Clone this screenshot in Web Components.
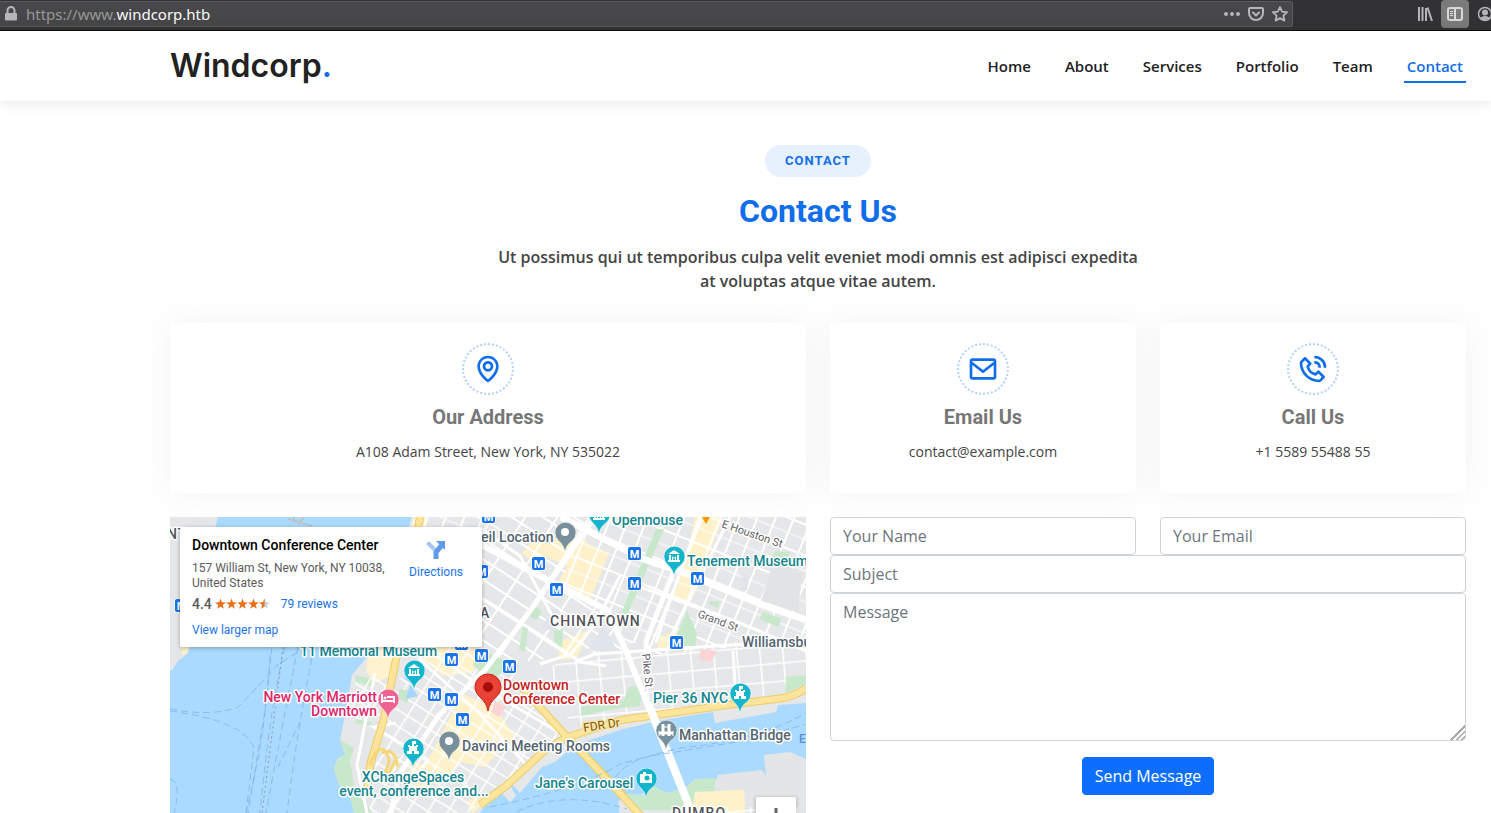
<!DOCTYPE html>
<html lang="en">
<head>
<meta charset="utf-8">
<title>Windcorp</title>
<style>
html, body { margin: 0; height: 100%; }
body { font-family: "Open Sans", sans-serif; color: #444; background: #fff; overflow: hidden; }
</style>
</head>
<body>
<wc-window></wc-window>

<template id="window-tpl">
<style>
:host { display: flex; flex-direction: column; height: 100vh; }
main { flex: 1; min-height: 0; overflow: auto; scrollbar-width: none; }
.contact { padding: 44px 25px 24px 170px; }
.grid { display: grid; grid-template-columns: repeat(4, minmax(0, 1fr)); gap: 24px; margin-top: 30px; }
.wide { grid-column: span 2; }
</style>
<wc-toolbar></wc-toolbar>
<wc-header></wc-header>
<main>
<section class="contact">
<wc-section-title>
<span slot="badge">Contact</span>
<span slot="title">Contact Us</span>
Ut possimus qui ut temporibus culpa velit eveniet modi omnis est adipisci expedita at voluptas atque vitae autem.
</wc-section-title>
<div class="grid">
<wc-info-box class="wide" icon="map"><span slot="title">Our Address</span>A108 Adam Street, New York, NY 535022</wc-info-box>
<wc-info-box icon="mail"><span slot="title">Email Us</span>contact@example.com</wc-info-box>
<wc-info-box icon="phone"><span slot="title">Call Us</span>+1 5589 55488 55</wc-info-box>
<wc-map class="wide"></wc-map>
<wc-contact-form class="wide"></wc-contact-form>
</div>
</section>
</main>
</template>

<template id="toolbar-tpl">
<style>
:host { display: flex; align-items: flex-start; height: 30px; background: #323234; border-bottom: 1px solid #0c0c0d; overflow: hidden; }
.url { flex: 1; display: flex; align-items: center; box-sizing: border-box; height: 26px; margin-top: 1px; padding: 0 4px; background: #474749; border: 1px solid #5c5c5f; border-left: 0; border-radius: 0 3px 3px 0; font: 15px/24px "Noto Sans", sans-serif; color: #f9f9fa; }
.address { flex: 1; margin-left: 8px; }
.address span { color: #98989a; }
svg { display: block; }
button { padding: 0; border: 0; background: none; color: #b6b6b8; }
.url button + button { margin-left: 8px; }
.tools { display: flex; align-items: flex-start; width: 198px; flex: none; justify-content: flex-end; }
.tools button { height: 28px; flex: none; display: grid; place-items: center; }
.library { width: 32px; }
.tools .side { width: 28px; background: #7b7b7c; border-radius: 4px; color: #d8d8d9; }
.account { width: 22px; overflow: hidden; }
</style>
<div class="url">
<svg width="14" height="16" viewBox="0 0 14 16"><path d="M1.500 7.500h11v6.500h-11z" fill="#b6b6b8" stroke="#b6b6b8" stroke-linejoin="round"/><path d="M3.500 7V4.500a3.500 3.500 0 0 1 7 0V7" fill="none" stroke="#b6b6b8" stroke-width="2"/></svg>
<div class="address"><span>https://www.</span>windcorp.htb</div>
<button aria-label="Page actions"><svg width="16" height="16" fill="currentColor"><circle cx="2" cy="8" r="2"/><circle cx="8" cy="8" r="2"/><circle cx="14" cy="8" r="2"/></svg></button>
<button aria-label="Save to Pocket"><svg width="16" height="16" fill="none" stroke="currentColor" stroke-width="2" stroke-linecap="round" stroke-linejoin="round"><path d="M2 2h12q1 0 1 1v4a7 7 0 0 1-14 0V3q0-1 1-1z"/><path d="M5 6.500l3 3 3-3"/></svg></button>
<button aria-label="Bookmark"><svg width="16" height="16" fill="none" stroke="currentColor" stroke-width="1.800" stroke-linejoin="round"><path d="M8 1l2.100 4.600 5 .6-3.700 3.400 1 5L8 12.100 3.600 14.600l1-5L.9 6.200l5-.6z"/></svg></button>
</div>
<div class="tools">
<button class="library" aria-label="Library"><svg width="16" height="16" stroke="currentColor" stroke-width="2"><path d="M2 1v14M5.500 1v14M9 2v13" /><path d="M10.500 1.500L15 15" /></svg></button>
<button class="side" aria-label="Sidebars"><svg width="16" height="16" fill="none" stroke="currentColor" stroke-width="2"><rect x="1" y="2" width="14" height="12" rx="2"/><path d="M8 2v12"/><path d="M3 5.500h3M3 7.500h3M3 9.500h3" stroke-width="1"/></svg></button>
<button class="account" aria-label="Account"><svg width="16" height="16" style="margin-left:8px"><circle cx="8" cy="8" r="6.500" fill="none" stroke="currentColor" stroke-width="1.500"/><circle cx="8" cy="6.500" r="3" fill="currentColor"/><path d="M3 12q5-4 10 0-5 4-10 0" fill="currentColor"/></svg></button>
</div>
</template>

<template id="header-tpl">
<style>
:host { display: flex; align-items: center; justify-content: space-between; flex: none; height: 70px; padding: 0 25px 0 170px; background: #fff; box-shadow: 0 0 15px rgba(0,0,0,.12); position: relative; z-index: 1; }
a { text-decoration: none; }
.logo { font: 600 32px/40px Inter, sans-serif; color: #222; }
.logo span { color: #106eea; }
nav { display: flex; gap: 28px; margin-top: 3px; }
nav a { font-weight: 600; font-size: 15px; line-height: 28px; padding: 0 3px 1px; color: #222; border-bottom: 2px solid transparent; }
nav a[aria-current] { color: #106eea; border-color: #106eea; }
</style>
<a class="logo" href="#home">Windcorp<span>.</span></a>
<nav><a href="#home">Home</a><a href="#about">About</a><a href="#services">Services</a><a href="#portfolio">Portfolio</a><a href="#team">Team</a><a href="#contact" aria-current="page">Contact</a></nav>
</template>

<template id="title-tpl">
<style>
:host { display: flex; flex-direction: column; align-items: center; text-align: center; }
.badge { font: 700 13px/16px Roboto, sans-serif; letter-spacing: 1px; text-transform: uppercase; padding: 8px 20px; border-radius: 50px; background: #e7f1fd; color: #106eea; }
h2 { margin: 15px 0 0; font: 700 32px/38px Roboto, sans-serif; color: #106eea; }
p { width: 50%; margin: 15px 0 0; font-size: 16px; line-height: 24px; font-weight: 600; }
</style>
<div class="badge"><slot name="badge"></slot></div>
<h2><slot name="title"></slot></h2>
<p><slot></slot></p>
</template>

<template id="info-tpl">
<style>
:host { display: flex; flex-direction: column; align-items: center; text-align: center; padding: 20px 0 30px; background: #fff; box-shadow: 0 0 30px rgba(214,215,216,.3); }
.icon { box-sizing: border-box; width: 52px; height: 52px; padding: 8px; border: 2px dotted #b3d1fa; border-radius: 50%; color: #106eea; }
svg { display: block; width: 32px; height: 32px; fill: currentColor; }
h3 { margin: 10px 0 12px; font: 700 20px/24px Roboto, sans-serif; color: #777; }
p { margin: 0; font-size: 14px; line-height: 22px; }
</style>
<div class="icon"><svg viewBox="0 0 24 24" aria-hidden="true"><path/></svg></div>
<h3><slot name="title"></slot></h3>
<p><slot></slot></p>
</template>

<template id="form-tpl">
<style>
:host { display: block; }
form { display: grid; grid-template-columns: 1fr 1fr; column-gap: 24px; }
input, textarea { box-sizing: border-box; width: 100%; min-width: 0; margin: 0; display: block; padding: 6px 12px; border: 1px solid #ced4da; border-radius: 4px; background: #fff; font: 16px/24px "Open Sans", sans-serif; color: #212529; }
input { height: 38px; }
textarea { height: 148px; resize: vertical; }
::placeholder { color: #6c757d; opacity: 1; }
textarea::-webkit-resizer { background: linear-gradient(135deg, transparent 50%, #aaa 50% 57%, transparent 57% 68%, #aaa 68% 75%, transparent 75% 86%, #aaa 86% 93%, transparent 93%); }
.full { grid-column: 1 / -1; }
button { justify-self: center; margin-top: 16px; padding: 6px 12px; border: 1px solid #0d6efd; border-radius: 4px; background: #0d6efd; color: #fff; font: 16px/24px "Open Sans", sans-serif; }
</style>
<form>
<input type="text" placeholder="Your Name" aria-label="Your Name">
<input type="email" placeholder="Your Email" aria-label="Your Email">
<input class="full" type="text" placeholder="Subject" aria-label="Subject">
<textarea class="full" placeholder="Message" aria-label="Message"></textarea>
<button class="full" type="button">Send Message</button>
</form>
</template>

<template id="place-tpl">
<style>
:host { display: flex; justify-content: space-between; box-sizing: border-box; background: #fff; border-radius: 2px; box-shadow: 0 1px 4px rgba(0,0,0,.3); padding: 10px 19px 9px 12px; font: 12px/15px Roboto, sans-serif; color: #5b5b5b; }
h4 { margin: 0 0 8px; font: 500 14px/16px Roboto, sans-serif; color: #000; }
address { font-style: normal; width: 196px; }
a { color: #1a73e8; text-decoration: none; }
.rating { display: flex; align-items: center; margin: 4px 0 10px; line-height: 18px; }
.rating b { font-weight: 500; font-size: 14px; margin-right: 3px; }
.rating svg { margin-right: 11px; }
.dir { display: flex; flex-direction: column; align-items: center; gap: 4px; margin-top: 2px; }
</style>
<div>
<h4>Downtown Conference Center</h4>
<address>157 William St, New York, NY 10038, United States</address>
<div class="rating"><b>4.4</b>
<svg width="55" height="12" viewBox="0 0 55 12" role="img" aria-label="4.4 stars">
<defs><path id="s" d="M5.500 .5l1.400 3.800 4 .1-3.200 2.500 1.200 3.900-3.400-2.300-3.400 2.300 1.200-3.900L.1 4.400l4-.1z"/><clipPath id="h"><path d="M0 0h49.500v12H0z"/></clipPath></defs>
<use href="#s" x="44" fill="#ccc"/><g fill="#e7711b" clip-path="url(#h)"><use href="#s"/><use href="#s" x="11"/><use href="#s" x="22"/><use href="#s" x="33"/><use href="#s" x="44"/></g></svg>
<a href="#reviews">79 reviews</a></div>
<a href="#larger">View larger map</a>
</div>
<a class="dir" href="#directions"><svg width="22" height="22" viewBox="0 0 22 22"><path d="M2.500 3.500l7 7" stroke="#a6c8f5" stroke-width="4"/><path d="M11 20v-7l6-7" fill="none" stroke="#5e9bea" stroke-width="5"/><path d="M11 2h9v9z" fill="#5e9bea"/></svg>Directions</a>
</template>

<template id="map-tpl">
<style>
:host { display: block; position: relative; height: 384px; overflow: hidden; background: #aadaff; }
.canvas { display: block; width: 100%; height: 100%; }
wc-place-card { position: absolute; left: 10px; top: 10px; width: 302px; height: 120px; }
.zoom { position: absolute; right: 10px; top: 280px; width: 40px; background: #fff; border-radius: 2px; box-shadow: 0 1px 4px rgba(0,0,0,.3); }
.zoom button { display: grid; place-items: center; width: 40px; height: 40px; padding: 0; border: 0; background: none; }
text { font-family: Roboto, sans-serif; font-size: 14px; font-weight: 500; paint-order: stroke; stroke: #fff; stroke-width: 3px; stroke-linejoin: round; }
.teal { fill: #12858e; }
.slate { fill: #546570; }
.pink { fill: #e0246a; }
.red { fill: #c5221f; }
.area { fill: #505357; letter-spacing: 1px; }
.road { fill: #5f6368; font-size: 11px; font-weight: 400; }
.fdr { fill: #7c5514; font-size: 12px; font-weight: 400; stroke: #fbe6a5; }
.metro text { font-size: 11px; font-weight: 700; fill: #fff; stroke: none; text-anchor: middle; }
.mid { text-anchor: middle; }
.end { text-anchor: end; }
</style>
<svg class="canvas" viewBox="0 0 636 384" preserveAspectRatio="xMidYMin slice" role="img" aria-label="Map of Lower Manhattan">
<defs>
<pattern id="east" width="17" height="29" patternUnits="userSpaceOnUse" patternTransform="rotate(22)"><path d="M0 0H17M0 0V29" stroke="#fff" stroke-width="4"/><path d="M0 15H17" stroke="#fff" stroke-width="1"/></pattern>
<pattern id="soho" width="27" height="17" patternUnits="userSpaceOnUse" patternTransform="rotate(33)"><path d="M0 0H27M0 0V17" stroke="#fff" stroke-width="4"/></pattern>
<pattern id="fidi" width="17" height="14" patternUnits="userSpaceOnUse" patternTransform="rotate(32)"><path d="M0 0H17M0 0V14" stroke="#fff" stroke-width="3"/></pattern>
<pattern id="les" width="23" height="18" patternUnits="userSpaceOnUse" patternTransform="rotate(-5)"><path d="M0 0H23M0 0V18" stroke="#fff" stroke-width="3"/></pattern>
<clipPath id="landclip"><use href="#land"/></clipPath>
<g id="m" class="metro"><rect x="-7" y="-7" width="15" height="15" rx="3" fill="#fff" opacity=".6"/><rect x="-6" y="-6" width="13" height="13" rx="2" fill="#1a73e8"/><text x=".5" y="4.500">M</text></g>
<path id="pin" d="M0 20C-1 14-4 11-7 8A10.500 10.500 0 1 1 8 8C4 11 1 14 0 20z" stroke="#fff" stroke-opacity=".5"/>
<path id="museum" d="M-6-2L0-6 6-2zM-5-1h2v5h-2zM3-1h2v5H3zM-6 4H6v2H-6zM-2 4v-4l2 2 2-2v4h-1V2L0 3l-1-1v2z" fill="#fff"/>
<path id="civic" d="M0-7h3v3H1v2h2v-1h2v2h-1v4h2v3H1V3h-2v3h-5V3h2v-4h-1v-2h2v1h2v-5z" fill="#fff"/>
</defs>

<!-- New Jersey shore -->
<path d="M0 0H48L12 135 16 138 8 144 2 153H0z" fill="#e5e6e8"/>
<path d="M12 130H20L17 137 12 138z" fill="#fff2c9"/>
<!-- Manhattan -->
<path id="land" d="M242 0H636V186L608 188 606 195 545 206 543 195 487 204 450 213 405 228 385 245 372 250 350 276 337 262 346 279 340 285 326 270 322 276 310 296 296 318H190L184 296 181 282 169 268 164 252 168 241 175 238 170 223 177 188 182 158 197 140z" fill="#e6e7e9"/>
<path d="M244 0H258L230 138 222 158 206 166 196 155 198 140 205 128z" fill="#fff2cf"/>
<path d="M170 223l14 8-4 12 5 32 16 18-4 16-13-13-3-14-12-14-5-16 4-11 7-3zM185 158l17 4 2 8-18-5z" fill="#c8e8cb"/>

<g fill="#fff1c9">
<path d="M391 10l27 15-10 28-31-13zM413 25l26 11-20 50-32-20zM525 0h28l-31 83h-20l14-38zM389 125l30-12-12 28-18 2zM490 119l28-8-5 20-26 3zM364 21l20 8-12 20-20-12zM262 115l24-12 30 30-13 22-30 4-22-18zM292 177l33 13 20 30-31 30-22-5-16 14-25-5 14-24zM240 245l28 5-8 23-22-5zM297 285l13-10 5 10-13 12z"/>
</g>
<g clip-path="url(#landclip)">
<path d="M312 0H425L390 66 437 93 455 132 312 150z" fill="url(#soho)"/>
<path d="M425 0H636V98L500 54 473 126H451L437 93 391 66z" fill="url(#east)"/>
<path d="M500 54L636 98V123L478 139 473 120z" fill="url(#east)"/>
<path d="M455 134L636 119V172L450 202 405 210 362 159 400 140z" fill="url(#les)"/>
<path d="M255 130L310 130 360 165 395 220 310 288 296 296H199L210 215 178 200 186 158 226 165z" fill="url(#fidi)"/>
<path d="M243 0H312V12H243z" fill="url(#east)"/>
</g>
<g fill="#c8e8cb">
<path d="M486 12h8L458 97l-8 2zM366 90l6 5-5 8-8-4zM354 102l4 10-3 22-6-1zM384 112h9l-1 20-8-5zM593 95l18 6-2 9-20-8zM517 94l10 22-2 15-22-5zM606 34l14 1-3 19-22-5zM313 133l28 14-20 18-18-17zM459 170l13-1-2 20-20 2zM411 190l55-9-3 7-52 11zM616 160l20-2v10l-21 8zM540 84l10 1-2 6-9-4zM230 172l12 2-5 12-10-5zM186 202l16 3-2 4-15-3z"/>
</g>
<path d="M604 42l28 15-4 38-37-11z" fill="#e2e3e5"/>
<path d="M531 132l16 2-6 11-12-3zM325 184l11 6-7 10-8-5z" fill="#fbd4d4"/>
<path d="M434 109l15 28-31-4zM382 90l9 6-6 18-13-2zM573 56l6 2-2 16-7-2z" fill="#dfe5eb"/>
<path d="M240 167l8 12-12 3zM234 161l9-1-3 6z" fill="#a9d7fb"/>

<g fill="none" stroke="#fff" stroke-linejoin="round">
<path d="M391 0l82 42 37 12 83 34 43 15" stroke-width="7"/>
<path d="M310 27l50 27 77 39 20 43 66 165" stroke-width="6"/>
<path d="M503 56l-27 68 1 15M425 0l-65 94-45 59-46 45-40 60-8 38" stroke-width="5"/>
<path d="M470 70l100 36 66 28M451 57l-26 50-24 30-31 10M530 0l-34 95-10 31M560 0l-62 125M310 80l62 39 38 26 26 4M312 12l38 27 40 74M405 145l20-8 211-14M563 134l3 50" stroke-width="3"/>
<path d="M264 137l48 33 85 50M248 141l60 54 52 57M205 156l-18 92 10 48M226 206l-22 4 54 33-40 53" stroke-width="3"/>
</g>
<g fill="none" stroke-linejoin="round">
<g stroke="#edcc6c" stroke-width="8"><path d="M250 0l-23 138-14 67-13 43-3 28"/><path d="M310 288l26-19 37-34q15-11 28-16l50-16 106-15 57-7q15-4 22-10"/><path d="M347 165l50 55 75 78"/></g>
<g stroke="#fce59a" stroke-width="6"><path d="M250 0l-23 138-14 67-13 43-3 28"/><path d="M310 288l26-19 37-34q15-11 28-16l50-16 106-15 57-7q15-4 22-10"/><path d="M347 165l50 55 75 78"/></g>
<path d="M200 248q9-25 17-11c7 13-8 20 2 19l8-16M212 236q12-7 16 14" stroke="#f5d777" stroke-width="3"/>
</g>

<!-- Brooklyn -->
<path d="M448 285L458 277 471 278 480 270 497 276 513 273 523 264 546 263 548 258 592 253 596 259 594 238 620 235 636 242V384H462z" fill="#e4e5e7"/>
<path d="M449 281l12-4 15 2 8-10 12 7 20-5 9-9 20-1v12l-30 20h-53z" fill="#c8e8cb"/>
<path d="M525 275l49-2 2 36H520z" fill="#fff1c9"/><path d="M520 290h116v94H490z" fill="url(#les)"/>
<path d="M420 244l78 84" stroke="#edcc6c" stroke-width="8"/><path d="M418 242l80 86" stroke="#fce59a" stroke-width="6"/>
<path d="M478 186l47 118" stroke="#fff" stroke-width="8"/>

<!-- Ferry routes -->
<g fill="none" stroke="#7fb0e8" stroke-opacity=".75" stroke-dasharray="7 4">
<path d="M0 192q42 8 68-2 20-20 38-41l22-14M0 194q75 10 84 37l-8 65M102 130L94 200 78 296M115 130q-15 60-25 166M128 130q-20 100-32 166M144 130q-18 90-27 166M100 138q-4 80-24 158M108 250l22-45M0 262q12 2 4 34"/>
<path d="M320 290q90-18 130-43l60-16q80-8 126-35M440 270q12-30 60-34l90-15 46-14M337 300q50-30 120-8"/>
</g>
<path d="M113 130L92 296" stroke="#8e9aa8" stroke-dasharray="2 3"/>
<path d="M118 2l14 4M134 0l-5 7M124 0v4l18 5" fill="none" stroke="#bbc4ca" stroke-width="2"/>

<text class="area" x="-3" y="22">NT</text>
<use href="#m" x="318" y="-1"/><use href="#m" x="464" y="36"/><use href="#m" x="368" y="46"/><use href="#m" x="386" y="72"/><use href="#m" x="464" y="66"/><use href="#m" x="527" y="61"/><use href="#m" x="506" y="125"/><use href="#m" x="311" y="138"/><use href="#m" x="281" y="142"/><use href="#m" x="339" y="149"/><use href="#m" x="264" y="177"/><use href="#m" x="281" y="182"/><use href="#m" x="292" y="202"/><use href="#m" x="311" y="54"/><use href="#m" x="291" y="126"/><use href="#m" x="11" y="88"/>

<g fill="#12b5cb">
<use href="#pin" x="429" y="-3"/><use href="#pin" x="504" y="39"/><use href="#pin" x="244" y="153"/><use href="#pin" x="243" y="231"/><use href="#pin" x="570" y="176"/><use href="#pin" x="476" y="261"/>
</g>
<g fill="#78909c"><use href="#pin" x="395" y="15"/><use href="#pin" x="279" y="224"/><use href="#pin" x="496" y="213"/></g>
<use href="#pin" x="218" y="182" fill="#f06292"/>
<path d="M532 0h8l-4 7z" fill="#f29900"/>
<circle cx="395" cy="15" r="4" fill="#fff"/><circle cx="279" cy="224" r="4" fill="#fff"/>
<use href="#museum" x="429" y="-3"/><use href="#museum" x="504" y="39"/><use href="#museum" x="244" y="153"/>
<use href="#civic" x="243" y="231"/><use href="#civic" x="570" y="176"/>
<path d="M470 257h3v-2h3v2h6v9h-12z" fill="#fff"/><circle cx="477" cy="261" r="2.500" fill="#12b5cb"/>
<path d="M212 177v9M212 184h12v2M224 183v-3h-7" fill="none" stroke="#fff" stroke-width="2"/><circle cx="215" cy="181" r="1.500" fill="#fff"/>
<path d="M489 216h14M493 207v12M499 207v12" stroke="#fff" stroke-width="3"/><path d="M489 219v-5M503 219v-5M493 210h6" stroke="#fff"/>
<path d="M318 194c-2-13-13-14-13-24a13 13 0 0 1 26 0c0 10-11 11-13 24z" fill="#ea4335" stroke="#c5221f"/><circle cx="318" cy="170" r="5" fill="#a50e0e"/>

<text class="teal" x="442" y="8">Openhouse</text>
<text class="slate" x="311" y="25">eil Location</text>
<text class="teal" x="517" y="49">Tenement Museum</text>
<text class="area" x="380" y="109">CHINATOWN</text>
<text class="area" x="310" y="101">A</text>
<text class="slate" x="572" y="130">Williamsburg</text>
<text class="teal" x="130" y="139">11 Memorial Museum</text>
<text class="pink end" x="207" y="185">New York Marriott</text><text class="pink end" x="207" y="199">Downtown</text>
<text class="red" x="333" y="173">Downtown</text><text class="red" x="333" y="187">Conference Center</text>
<text class="teal" x="483" y="186">Pier 36 NYC</text>
<text class="slate" x="509" y="223">Manhattan Bridge</text>
<text class="slate" x="292" y="234">Davinci Meeting Rooms</text>
<text class="teal mid" x="243" y="265">XChangeSpaces</text><text class="teal mid" x="244" y="279">event, conference and...</text>
<text class="teal" x="365" y="271">Jane's Carousel</text>
<text class="area" x="502" y="301">DUMBO</text>
<text class="road" transform="translate(551 10) rotate(19)">E Houston St</text>
<text class="road" transform="translate(527 100) rotate(20)">Grand St</text>
<text class="road" transform="translate(472 137) rotate(84)">Pike St</text>
<text class="fdr" transform="translate(414 215) rotate(-9)">FDR Dr</text>
<text x="629" y="226" style="fill:#5b8fd6;stroke:none;font-size:12px">E</text>
</svg>
<wc-place-card></wc-place-card>
<div class="zoom"><button aria-label="Zoom in"><svg width="18" height="18"><path d="M9 0v18M0 9h18" stroke="#666" stroke-width="3"/></svg></button><button aria-label="Zoom out"><svg width="18" height="18"><path d="M0 9h18" stroke="#666" stroke-width="3"/></svg></button></div>
</template>

<script>
const ICONS = {
  map: "M12 14c2.206 0 4-1.794 4-4s-1.794-4-4-4-4 1.794-4 4 1.794 4 4 4zm0-6c1.103 0 2 .897 2 2s-.897 2-2 2-2-.897-2-2 .897-2 2-2zM11.42 21.814a.998.998 0 0 0 1.16 0C12.884 21.599 20.029 16.44 20 10c0-4.411-3.589-8-8-8S4 5.589 4 9.995c-.029 6.445 7.116 11.604 7.42 11.819zM12 4c3.309 0 6 2.691 6 6.005.021 4.438-4.388 8.423-6 9.73-1.611-1.308-6.021-5.294-6-9.735 0-3.309 2.691-6 6-6z",
  mail: "M20 4H4c-1.103 0-2 .897-2 2v12c0 1.103.897 2 2 2h16c1.103 0 2-.897 2-2V6c0-1.103-.897-2-2-2zm0 2v.511l-8 6.223-8-6.222V6h16zM4 18V9.044l7.386 5.745a.994.994 0 0 0 1.228 0L20 9.044 20.002 18H4z",
  phone: "M16.57 22a2 2 0 0 0 1.43-.59l2.71-2.71a1 1 0 0 0 0-1.41l-4-4a1 1 0 0 0-1.41 0l-1.6 1.59a7.55 7.55 0 0 1-3-1.59 7.62 7.62 0 0 1-1.59-3l1.59-1.6a1 1 0 0 0 0-1.41l-4-4a1 1 0 0 0-1.41 0L2.59 6A2 2 0 0 0 2 7.43 15.28 15.28 0 0 0 6.3 17.7 15.28 15.28 0 0 0 16.57 22zM6 5.41L8.59 8 7.3 9.29a1 1 0 0 0-.3.91 10.12 10.12 0 0 0 2.3 4.5 10.08 10.08 0 0 0 4.5 2.3 1 1 0 0 0 .91-.27L16 15.41 18.59 18l-2 2a13.28 13.28 0 0 1-8.87-3.71A13.28 13.28 0 0 1 4 7.41zM20 11h2a8.81 8.81 0 0 0-9-9v2a6.77 6.77 0 0 1 7 7zM13 8c2.1 0 3 .9 3 3h2c0-3.22-1.78-5-5-5z"
};
class TemplateElement extends HTMLElement {
  constructor() {
    super();
    this.attachShadow({ mode: "open" }).append(document.getElementById(this.constructor.template).content.cloneNode(true));
  }
}
customElements.define("wc-toolbar", class extends TemplateElement { static template = "toolbar-tpl"; });
customElements.define("wc-header", class extends TemplateElement { static template = "header-tpl"; });
customElements.define("wc-section-title", class extends TemplateElement { static template = "title-tpl"; });
customElements.define("wc-info-box", class extends TemplateElement {
  static template = "info-tpl";
  connectedCallback() { this.shadowRoot.querySelector("path").setAttribute("d", ICONS[this.getAttribute("icon")]); }
});
customElements.define("wc-contact-form", class extends TemplateElement { static template = "form-tpl"; });
customElements.define("wc-place-card", class extends TemplateElement { static template = "place-tpl"; });
customElements.define("wc-map", class extends TemplateElement { static template = "map-tpl"; });
customElements.define("wc-window", class extends TemplateElement { static template = "window-tpl"; });
</script>
</body>
</html>
